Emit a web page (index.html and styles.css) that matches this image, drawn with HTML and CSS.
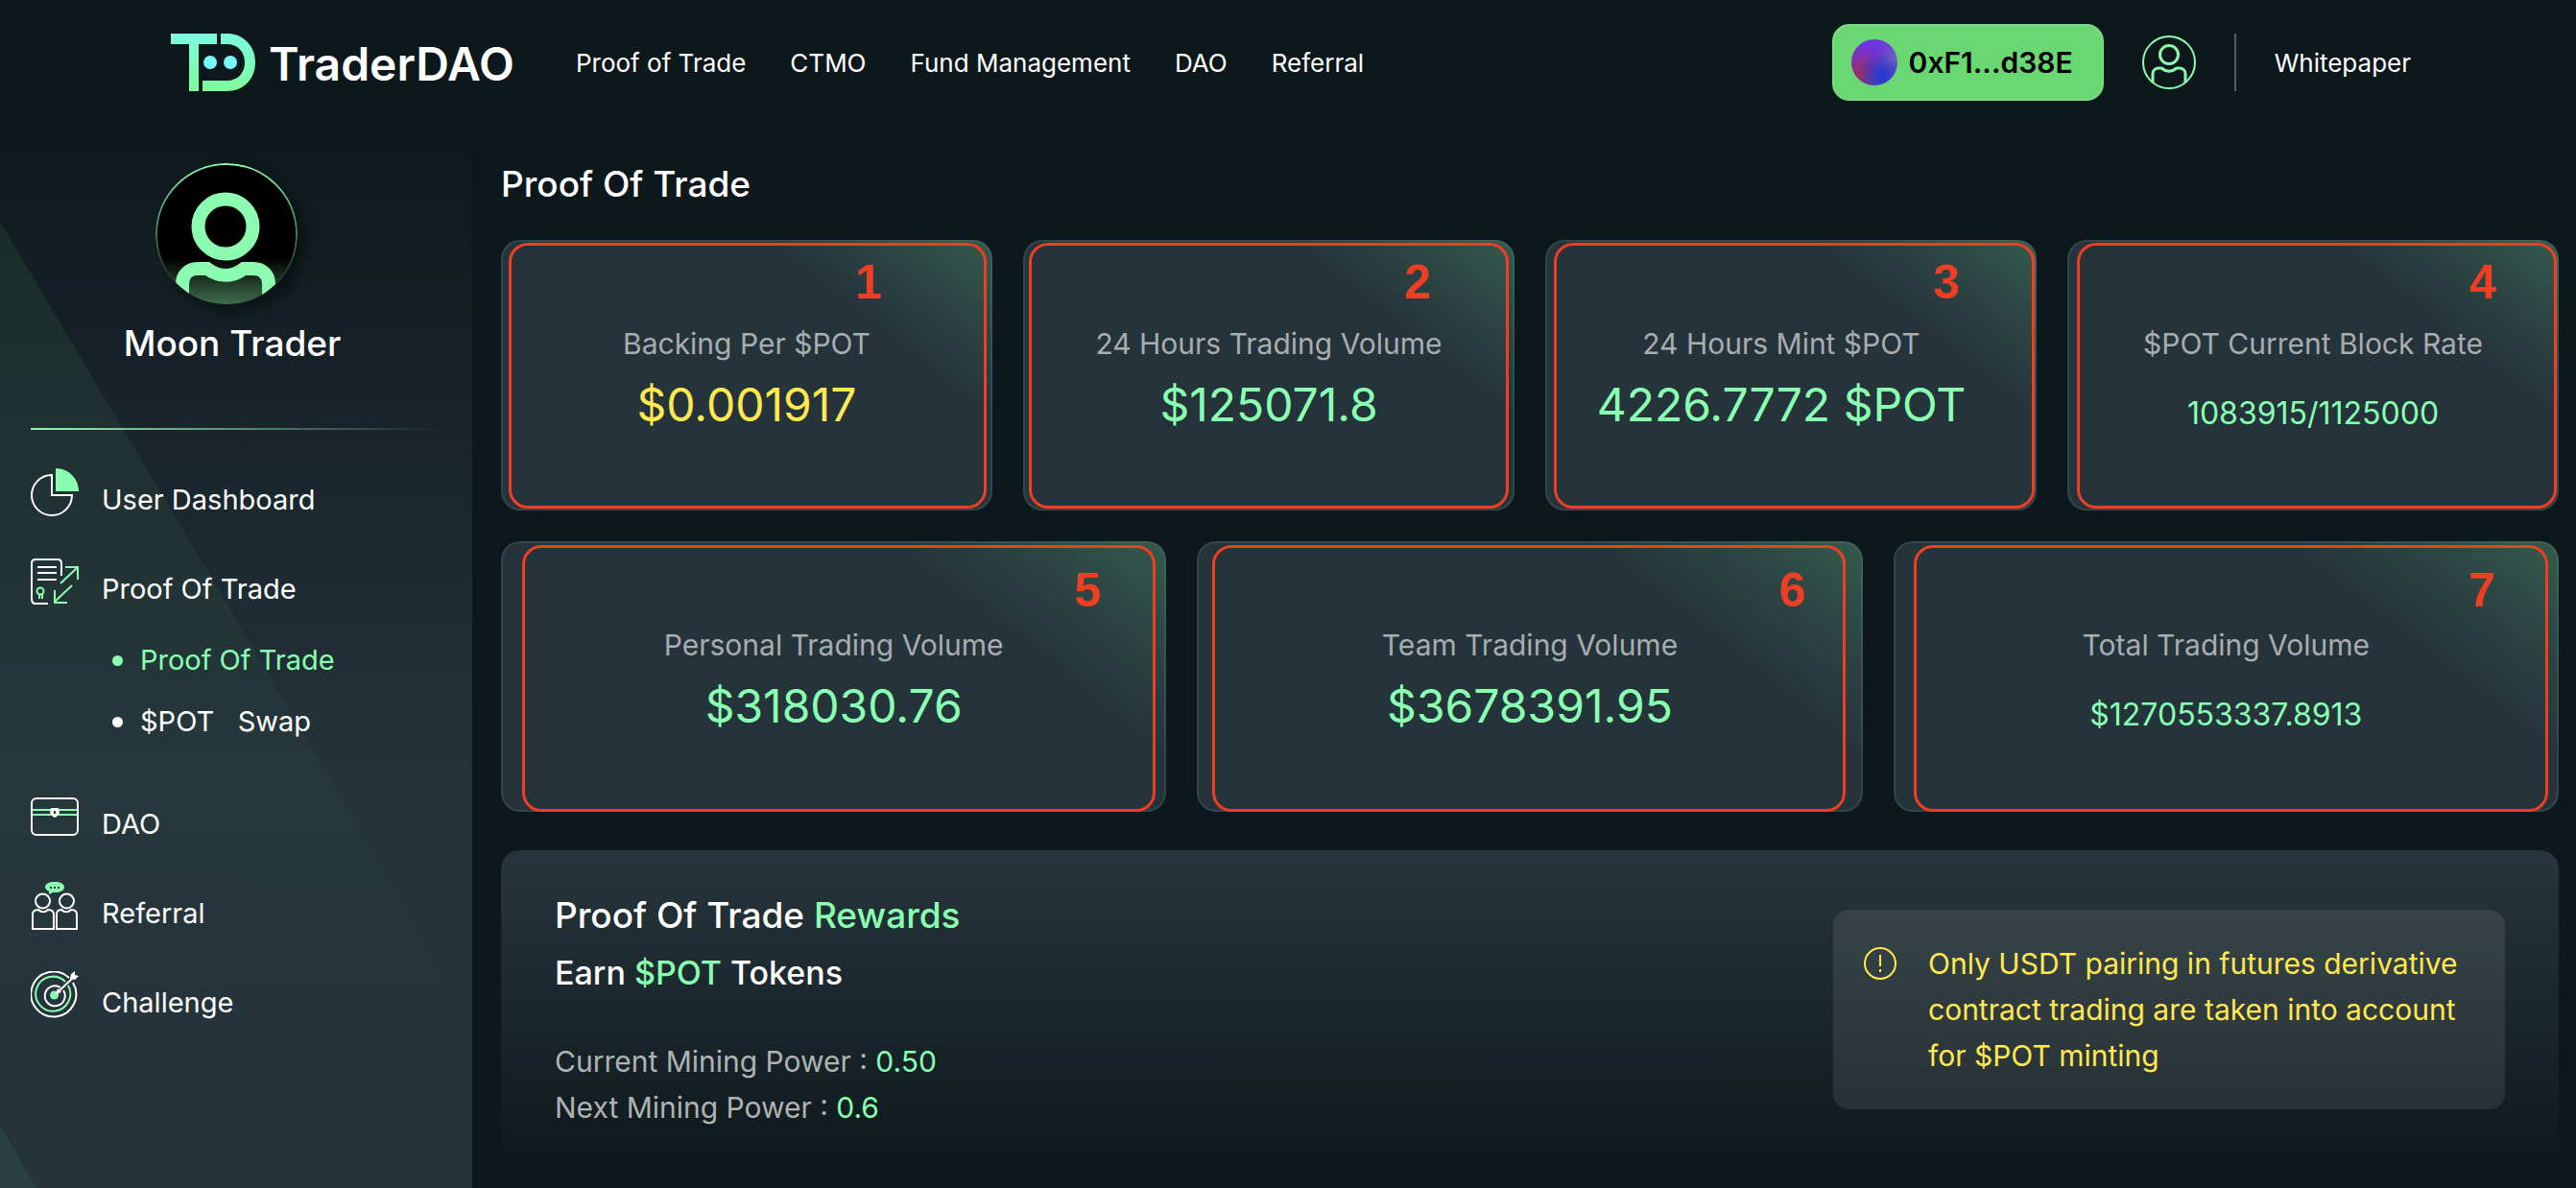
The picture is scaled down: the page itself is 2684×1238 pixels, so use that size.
FILE: index.html
```html
<!DOCTYPE html>
<html lang="en">

<head>
    <meta charset="UTF-8">
    <meta name="viewport" content="width=device-width, initial-scale=1.0">
    <title>TraderDAO - Proof Of Trade</title>
    <link rel="stylesheet" href="styles.css">
</head>

<body>
    <header class="header">
        <a class="logo" href="#">
            <svg class="logo-mark" viewBox="0 0 88 60" aria-hidden="true">
                <defs>
                    <linearGradient id="logoFill" x1="0" y1="0" x2="0" y2="60" gradientUnits="userSpaceOnUse">
                        <stop offset="0" stop-color="#7cfbe0" />
                        <stop offset="1" stop-color="#7efb9c" />
                    </linearGradient>
                </defs>
                <path fill="url(#logoFill)" d="M0 0H48V11H29V60H19V11H0Z" />
                <path fill="url(#logoFill)" d="M52 0H58C76 0 88 13 88 30S76 60 58 60H33V49H58C70 49 77 41 77 30S70 11 58 11H52Z" />
                <circle cx="41" cy="30" r="7" fill="#76fbff" />
                <circle cx="62" cy="30" r="7" fill="#76fbff" />
            </svg>
            <span class="logo-text">TraderDAO</span>
        </a>
        <nav class="main-nav">
            <a href="#">Proof of Trade</a>
            <a href="#">CTMO</a>
            <a href="#">Fund Management</a>
            <a href="#">DAO</a>
            <a href="#">Referral</a>
        </nav>
        <div class="header-right">
            <button class="wallet" type="button">
                <span class="wallet-avatar"></span>
                0xF1...d38E
            </button>
            <a class="profile" href="#" aria-label="Profile">
                <svg viewBox="0 0 56 56" fill="none" stroke="#8cfdb0">
                    <circle cx="28" cy="28" r="27" stroke-width="2" />
                    <circle cx="28" cy="20" r="9.500" stroke-width="3" />
                    <path stroke-width="3" d="M11 49V40C11 36 14 34 17 34H20C25 38 31 38 36 34H39C42 34 45 36 45 40V49" />
                </svg>
            </a>
            <span class="divider"></span>
            <a class="whitepaper" href="#">Whitepaper</a>
        </div>
    </header>

    <div class="layout">
        <aside class="sidebar">
            <div class="user">
                <svg class="user-avatar" viewBox="0 0 148 148" aria-hidden="true">
                    <defs>
                        <linearGradient id="avatarFill" x1="0" y1="0" x2="0" y2="1">
                            <stop offset="0.67" stop-color="#000" />
                            <stop offset="1" stop-color="#3d6e4c" />
                        </linearGradient>
                        <linearGradient id="avatarRing" x1="0" y1="0" x2="0" y2="1">
                            <stop offset="0" stop-color="#8cfdb0" />
                            <stop offset="0.9" stop-color="#8cfdb0" stop-opacity="0" />
                        </linearGradient>
                        <clipPath id="avatarClip">
                            <circle cx="74" cy="74" r="73" />
                        </clipPath>
                    </defs>
                    <circle cx="74" cy="74" r="73" fill="url(#avatarFill)" stroke="url(#avatarRing)" stroke-width="2" />
                    <g clip-path="url(#avatarClip)" fill="none" stroke="#8cfdb0" stroke-width="14">
                        <circle cx="73" cy="66" r="28.500" />
                        <path d="M28 150V126C28 116 35 110 44 110H54C66 119 80 119 92 110H102C111 110 118 116 118 126V150" />
                    </g>
                </svg>
                <h2 class="user-name">Moon Trader</h2>
            </div>
            <hr class="user-line">
            <ul class="menu">
                <li>
                    <a class="menu-link" href="#">
                        <svg class="menu-icon" viewBox="0 0 50 50" fill="none">
                            <path stroke="#fff" stroke-width="2" d="M22 7A21 21 0 1 0 43 28H22Z" />
                            <path fill="#8cfdb0" d="M26 0A24 24 0 0 1 50 24H26Z" />
                        </svg>
                        User Dashboard
                    </a>
                </li>
                <li>
                    <a class="menu-link" href="#">
                        <svg class="menu-icon" viewBox="0 0 50 50" fill="none" stroke-width="2">
                            <path stroke="#fff" d="M32 19V6Q32 2 28 2H5Q1 2 1 6V43Q1 48 5 48H18M7 10H27M7 16H27M7 23H27" />
                            <g stroke="#8cfdb0">
                                <path d="M31 27L49 10M36 10H49V23M43 29L25 46M25 34V47H38" />
                                <circle cx="10" cy="35" r="3.500" />
                                <path d="M9 38V43M12 38V43" />
                            </g>
                        </svg>
                        Proof Of Trade
                    </a>
                    <ul class="submenu">
                        <li class="active"><a href="#">Proof Of Trade</a></li>
                        <li><a href="#">$POT&nbsp;&nbsp; Swap</a></li>
                    </ul>
                </li>
                <li>
                    <a class="menu-link" href="#">
                        <svg class="menu-icon" viewBox="0 0 50 50" fill="none" stroke-width="2">
                            <path stroke="#8cfdb0" d="M2 18H48M2 23H48" />
                            <rect x="1" y="6" width="48" height="38" rx="5" stroke="#fff" />
                            <path fill="#fff" fill-rule="evenodd" d="M21 16H29L30 21L27 25L25 26L23 25L20 21ZM24 19V22H26V19Z" />
                        </svg>
                        DAO
                    </a>
                </li>
                <li>
                    <a class="menu-link" href="#">
                        <svg class="menu-icon" viewBox="0 0 50 50" fill="none" stroke="#fff" stroke-width="2">
                            <path fill="#8cfdb0" stroke="none" d="M25 0C31 0 35 2 35 5.500S31 11 25 11L23 11L19 13V10C17 9 15 7 15 5.500C15 2 19 0 25 0Z" />
                            <path stroke="#25343b" stroke-dasharray="2 2" d="M20 6H30" />
                            <circle cx="12.500" cy="20" r="7.500" />
                            <circle cx="37.500" cy="20" r="7.500" />
                            <path d="M2 49V34Q2 29 8 29C11 32 15 32 18 29Q24 29 24 34V49ZM27 49V34Q27 29 32 29C35 32 39 32 42 29Q48 29 48 34V49Z" />
                        </svg>
                        Referral
                    </a>
                </li>
                <li>
                    <a class="menu-link" href="#">
                        <svg class="menu-icon" viewBox="0 0 50 50" fill="none" stroke="#fff" stroke-width="2">
                            <path d="M40 7A23.500 23.500 0 1 0 44 12" />
                            <path stroke="#8cfdb0" d="M36 11A18 18 0 1 0 39 15" />
                            <path d="M31 17A10.500 10.500 0 1 0 34 20" />
                            <circle cx="24.500" cy="25" r="4.500" fill="#8cfdb0" stroke="none" />
                            <path d="M27 23L43 8" />
                            <path fill="#fff" stroke="none" d="M41 8L42 3L46 0V4L50 5L46 9ZM26 24L28 18L32 22Z" />
                        </svg>
                        Challenge
                    </a>
                </li>
            </ul>
        </aside>

        <main class="content">
            <h1 class="title">Proof Of Trade</h1>
            <section class="stats">
                <div class="stats-row four">
                    <div class="card">
                        <p class="label">Backing Per $POT</p>
                        <p class="value yellow">$0.001917</p>
                        <div class="mark mark-1">1</div>
                    </div>
                    <div class="card">
                        <p class="label">24 Hours Trading Volume</p>
                        <p class="value">$125071.8</p>
                        <div class="mark mark-2">2</div>
                    </div>
                    <div class="card mint">
                        <p class="label">24 Hours Mint $POT</p>
                        <p class="value">4226.7772 $POT</p>
                        <div class="mark mark-3">3</div>
                    </div>
                    <div class="card">
                        <p class="label">$POT Current Block Rate</p>
                        <p class="value small">1083915/1125000</p>
                        <div class="mark mark-4">4</div>
                    </div>
                </div>
                <div class="stats-row three">
                    <div class="card">
                        <p class="label">Personal Trading Volume</p>
                        <p class="value">$318030.76</p>
                        <div class="mark mark-5">5</div>
                    </div>
                    <div class="card">
                        <p class="label">Team Trading Volume</p>
                        <p class="value">$3678391.95</p>
                        <div class="mark mark-6">6</div>
                    </div>
                    <div class="card">
                        <p class="label">Total Trading Volume</p>
                        <p class="value small">$1270553337.8913</p>
                        <div class="mark mark-7">7</div>
                    </div>
                </div>
            </section>

            <section class="rewards">
                <div>
                    <h2 class="rewards-title">Proof Of Trade <span class="green">Rewards</span></h2>
                    <h3 class="rewards-sub">Earn <span class="green">$POT</span> Tokens</h3>
                    <p class="power">Current Mining Power : <span class="green">0.50</span></p>
                    <p class="power">Next Mining Power : <span class="green">0.6</span></p>
                </div>
                <div class="notice">
                    <svg class="notice-icon" viewBox="0 0 34 34" fill="none" stroke="#ffe94f" stroke-width="2" aria-hidden="true">
                        <circle cx="17" cy="17" r="16" />
                        <path d="M17 8V20M17 23V26" />
                    </svg>
                    <p>Only USDT pairing in futures derivative contract trading are taken into account for $POT minting</p>
                </div>
            </section>
        </main>
    </div>
</body>

</html>
```

FILE: styles.css
```css
* {
    box-sizing: border-box;
}

body {
    margin: 0;
    min-height: 100vh;
    display: flex;
    flex-direction: column;
    background-color: #0d181c;
    color: white;
    font-family: Inter, "Liberation Sans", sans-serif;
    font-size: 30px;
    line-height: 48px;
}

h1,
h2,
h3,
p,
ul {
    margin: 0;
    padding: 0;
}

ul {
    list-style: none;
}

a {
    color: inherit;
    text-decoration: none;
}

.green {
    color: #8affb2;
}

/* header */
.header {
    display: flex;
    align-items: center;
    height: 130px;
    padding: 0 172px 0 178px;
    font-size: 26px;
}

.logo {
    display: flex;
    align-items: center;
    gap: 14px;
}

.logo-mark {
    width: 88px;
    height: 60px;
}

.logo-text {
    padding-top: 4px;
    font-size: 48px;
    font-weight: 600;
}

.main-nav {
    display: flex;
    gap: 46px;
    margin-left: 64px;
    padding-top: 2px;
}

.header-right {
    display: flex;
    align-items: center;
    gap: 40px;
    margin-left: auto;
}

.wallet {
    display: flex;
    align-items: center;
    gap: 12px;
    height: 80px;
    padding: 0 30px 0 18px;
    border: 2px solid #79dc80;
    border-radius: 18px;
    background-color: #6ad872;
    color: black;
    font-family: inherit;
    font-size: 30px;
    font-weight: 600;
}

.wallet-avatar {
    width: 48px;
    height: 48px;
    border-radius: 50%;
    background: radial-gradient(circle at 65% 78%, #1c3ccb, transparent 50%),
        radial-gradient(circle at 20% 75%, #a02c5c, transparent 55%),
        radial-gradient(circle at 95% 45%, #7068b8, transparent 40%),
        #7034dc;
}

.profile {
    width: 56px;
    height: 56px;
}

.profile svg {
    display: block;
}

.divider {
    width: 2px;
    height: 60px;
    background-color: #565d5f;
}

.whitepaper {
    padding-top: 2px;
}

/* sidebar */
.layout {
    flex: 1;
    display: flex;
}

.sidebar {
    flex: none;
    width: 492px;
    padding: 40px 32px;
    background: linear-gradient(to bottom, #0d181c 0, #18242a 300px, #25343b 700px);
    font-size: 29px;
    position: relative;
}

/* diagonal light on the left side */
.sidebar::before,
.sidebar::after {
    content: "";
    position: absolute;
    left: 0;
    clip-path: polygon(0 0, 100% 100%, 0 100%);
}

.sidebar::before {
    top: 101px;
    width: 100%;
    height: 830px;
    background: linear-gradient(to bottom, rgba(50, 90, 65, 0.28), rgba(48, 80, 70, 0.2) 60%, transparent);
}

.sidebar::after {
    bottom: 0;
    width: 42px;
    height: 71px;
    background-color: #2b4043;
}

.user,
.menu {
    position: relative;
}

.user {
    text-align: center;
}

.user-avatar {
    display: block;
    width: 148px;
    height: 148px;
    margin: 0 auto 16px 130px;
    border-radius: 50%;
    box-shadow: 8px 8px 12px rgba(0, 0, 0, 0.4);
}

.user-name {
    padding-right: 8px;
    font-size: 37px;
    font-weight: 500;
}

.user-line {
    height: 2px;
    margin: 64px 0 40px;
    border: none;
    background: linear-gradient(to right, #8cfdb0, transparent);
    position: relative;
}

.menu {
    display: flex;
    flex-direction: column;
    gap: 35px;
}

.menu-link {
    display: flex;
    gap: 24px;
    height: 58px;
    line-height: 66px;
}

.menu-icon {
    width: 50px;
    height: 50px;
}

.submenu {
    margin: 17px 0 7px 85px;
    line-height: 64px;
}

.submenu li {
    display: flex;
    align-items: center;
    gap: 18px;
}

.submenu li::before {
    content: "";
    width: 11px;
    height: 11px;
    border-radius: 50%;
    background-color: currentColor;
}

.submenu .active {
    color: #8affb2;
}

/* content */
.content {
    flex: 1;
    padding: 38px 18px 26px 30px;
}

.title {
    margin-bottom: 34px;
    font-size: 37px;
    font-weight: 500;
}

.stats {
    display: flex;
    flex-direction: column;
    gap: 32px;
}

.stats-row {
    display: grid;
    gap: 32px;
}

.four {
    grid-template-columns: repeat(4, 1fr);
}

.three {
    grid-template-columns: repeat(3, 1fr);
}

.card {
    position: relative;
    min-height: 282px;
    padding-top: 82px;
    border: 2px solid rgba(110, 150, 145, 0.2);
    border-radius: 20px;
    background: linear-gradient(218deg, #33564b 3%, #2c4543 14%, #25333b 28%) border-box;
    text-align: center;
}

.mint {
    padding-right: 20px;
}

.label {
    color: #a8adb0;
}

.value {
    margin-top: 8px;
    color: #8affb2;
    font-size: 48px;
    line-height: 64px;
}

.value.small {
    margin-top: 17px;
    font-size: 32px;
}

.value.yellow {
    color: #ffe94f;
}

/* numbered frames over the cards */
.mark {
    position: absolute;
    top: 1px;
    bottom: 0;
    border: 3px solid #ee3e23;
    border-radius: 20px;
    color: #ee3e23;
    font-family: "Liberation Sans", sans-serif;
    font-size: 50px;
    font-weight: bold;
    line-height: 76px;
    text-align: right;
}

.mark-1 {
    left: 6px;
    right: 4px;
    padding-right: 106px;
}

.mark-2 {
    left: 4px;
    right: 4px;
    padding-right: 78px;
}

.mark-3 {
    left: 7px;
    right: 0;
    padding-right: 75px;
}

.mark-4 {
    left: 8px;
    right: 0;
    padding-right: 60px;
}

.mark-5,
.mark-6,
.mark-7 {
    top: 2px;
    bottom: -2px;
    line-height: 88px;
}

.mark-5 {
    left: 20px;
    right: 9px;
    padding-right: 54px;
}

.mark-6 {
    left: 14px;
    right: 16px;
    padding-right: 38px;
}

.mark-7 {
    left: 19px;
    right: 9px;
    padding-right: 52px;
}

/* rewards */
.rewards {
    display: flex;
    align-items: center;
    justify-content: space-between;
    margin-top: 40px;
    padding: 40px 56px;
    border-radius: 20px;
    background: linear-gradient(to bottom, #27363c, #0d181c);
}

.rewards-title {
    padding-top: 4px;
    font-size: 37px;
    font-weight: 500;
}

.rewards-sub {
    margin: 12px 0 44px;
    font-size: 34px;
    font-weight: 500;
}

.power {
    color: #b0b3b4;
}

.notice {
    display: flex;
    align-items: flex-start;
    gap: 33px;
    width: 700px;
    padding: 32px;
    border-radius: 16px;
    background-color: rgba(217, 217, 217, 0.11);
    color: #ffe94f;
}

.notice p {
    flex: 1;
}

.notice-icon {
    width: 34px;
    height: 34px;
    margin-top: 7px;
}
```
